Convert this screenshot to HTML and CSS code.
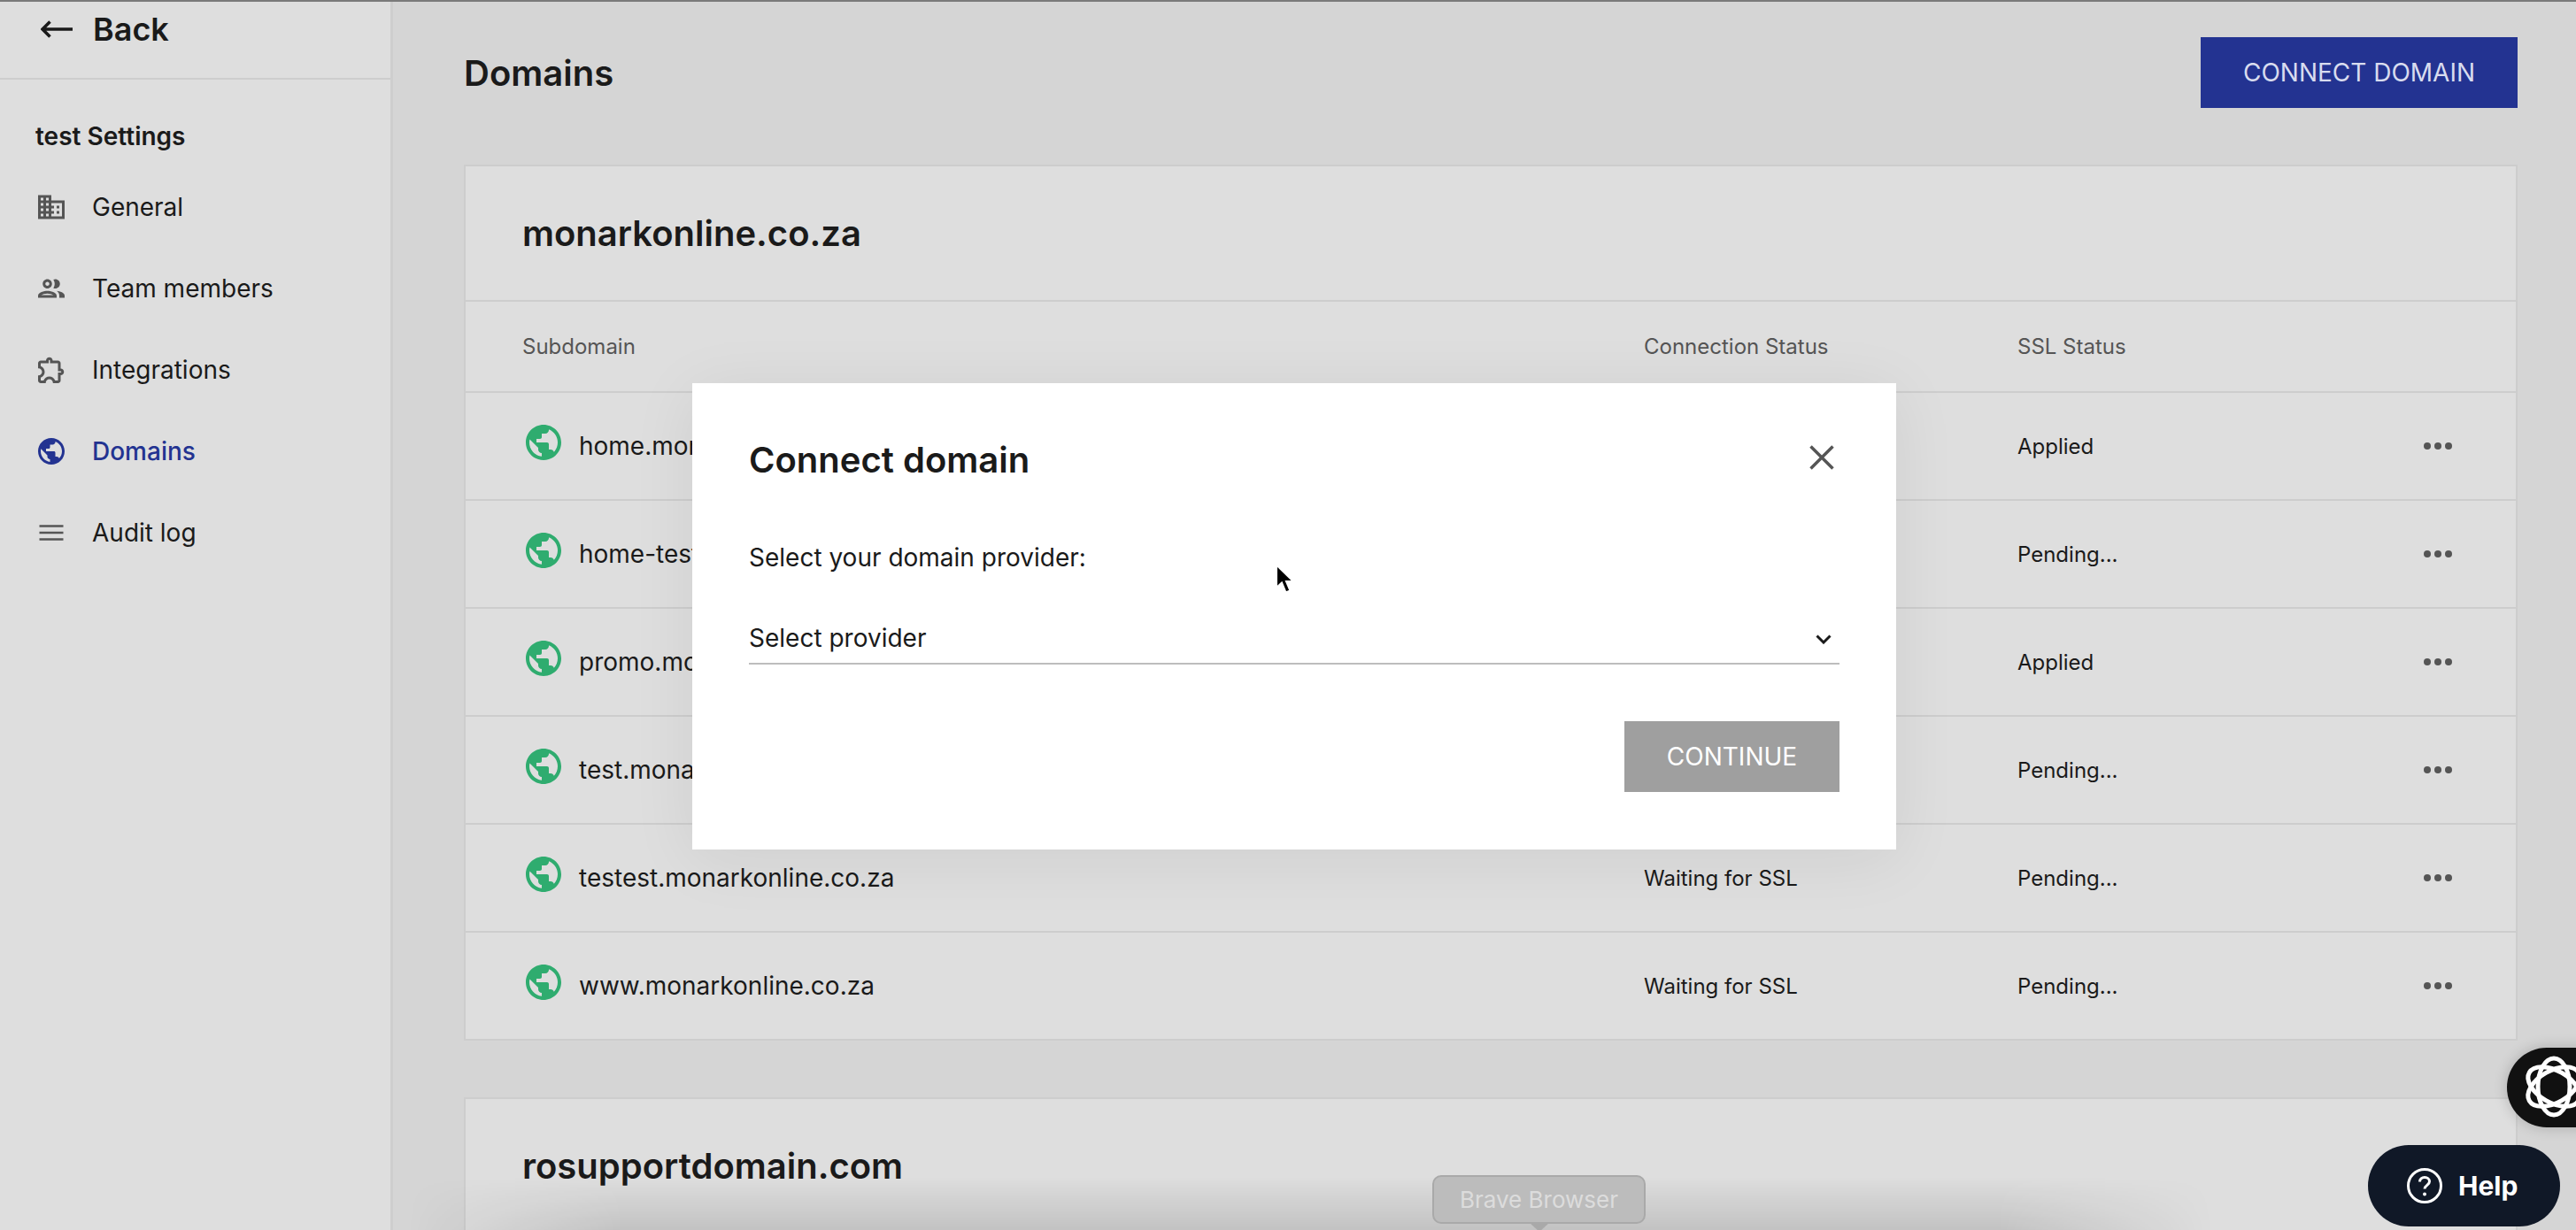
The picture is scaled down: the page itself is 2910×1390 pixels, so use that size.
FILE: index.html
```html
<!DOCTYPE html>
<html lang="en">
<head>
    <meta charset="UTF-8">
    <meta name="viewport" content="width=device-width, initial-scale=1.0">
    <title>Domains</title>
    <link rel="stylesheet" href="styles.css">
</head>
<body>

    <svg class="defs" width="0" height="0">
        <symbol id="globe" viewBox="0 0 24 24">
            <path d="M12 2C6.48 2 2 6.48 2 12s4.48 10 10 10 10-4.48 10-10S17.52 2 12 2zm-1 17.93c-3.95-.49-7-3.85-7-7.93 0-.62.08-1.21.21-1.79L9 15v1c0 1.1.9 2 2 2v1.93zm6.9-2.54c-.26-.81-1-1.39-1.9-1.39h-1v-3c0-.55-.45-1-1-1H8v-2h2c.55 0 1-.45 1-1V7h2c1.1 0 2-.9 2-2v-.41c2.93 1.19 5 4.06 5 7.41 0 2.08-.8 3.97-2.1 5.39z"/>
        </symbol>
    </svg>

    <div class="app">
        <aside class="sidebar">
            <a class="back">
                <svg class="back-icon" viewBox="0 0 36 20"><path d="M36 10H2M10.500 1.500 2 10l8.500 8.500"/></svg>
                <span>Back</span>
            </a>
            <h2 class="side-title">test Settings</h2>
            <nav class="side-nav">
                <a class="nav-item">
                    <svg class="nav-icon" viewBox="0 0 24 24"><path d="M12 7V3H2v18h20V7H12zM6 19H4v-2h2v2zm0-4H4v-2h2v2zm0-4H4V9h2v2zm0-4H4V5h2v2zm4 12H8v-2h2v2zm0-4H8v-2h2v2zm0-4H8V9h2v2zm0-4H8V5h2v2zm10 12h-8v-2h2v-2h-2v-2h2v-2h-2V9h8v10zm-2-8h-2v2h2v-2zm0 4h-2v2h2v-2z"/></svg>
                    General
                </a>
                <a class="nav-item">
                    <svg class="nav-icon" viewBox="0 0 24 24"><path d="M9 13.750c-2.340 0-7 1.170-7 3.500V19h14v-1.750c0-2.330-4.660-3.500-7-3.500zM4.340 17c.84-.58 2.870-1.250 4.660-1.250s3.820.67 4.660 1.250H4.340zM9 12c1.930 0 3.500-1.570 3.500-3.500S10.930 5 9 5 5.500 6.570 5.500 8.500 7.070 12 9 12zm0-5c.83 0 1.500.67 1.500 1.500S9.830 10 9 10s-1.500-.67-1.500-1.500S8.170 7 9 7zm7.040 6.810c1.160.84 1.960 1.960 1.960 3.440V19h4v-1.750c0-2.020-3.500-3.170-5.960-3.440zM15 12c1.930 0 3.500-1.570 3.500-3.500S16.930 5 15 5c-.54 0-1.040.13-1.500.35.63.89 1 1.980 1 3.150s-.37 2.260-1 3.150c.46.22.96.35 1.500.35z"/></svg>
                    Team members
                </a>
                <a class="nav-item">
                    <svg class="nav-icon" viewBox="0 0 24 24"><path d="M10.500 4.500c.28 0 .5.22.5.5v2h6v6h2c.28 0 .5.22.5.5s-.22.5-.5.5h-2v6h-2.120c-.68-1.750-2.390-3-4.380-3s-3.700 1.250-4.380 3H4v-2.120c1.750-.68 3-2.390 3-4.380 0-1.990-1.240-3.700-2.990-4.380L4 7h6V5c0-.28.22-.5.5-.5m0-2C9.120 2.500 8 3.620 8 5H4c-1.100 0-1.990.9-1.990 2v3.800h.29c1.490 0 2.700 1.210 2.700 2.700s-1.210 2.700-2.700 2.700H2V20c0 1.100.9 2 2 2h3.800v-.3c0-1.490 1.210-2.700 2.700-2.700 1.490 0 2.700 1.210 2.700 2.700v.3H17c1.100 0 2-.9 2-2v-4c1.380 0 2.500-1.120 2.500-2.500S20.380 11 19 11V7c0-1.100-.9-2-2-2h-4c0-1.380-1.120-2.500-2.500-2.500z"/></svg>
                    Integrations
                </a>
                <a class="nav-item active">
                    <svg class="nav-icon"><use href="#globe"/></svg>
                    Domains
                </a>
                <a class="nav-item">
                    <svg class="nav-icon" viewBox="0 0 24 24"><path d="M3 17.800h18v-1.600H3v1.600zm0-5h18v-1.600H3v1.600zm0-6.600v1.600h18V6.200H3z"/></svg>
                    Audit log
                </a>
            </nav>
        </aside>

        <main class="main">
            <header class="page-head">
                <h1>Domains</h1>
                <button class="connect-btn">CONNECT DOMAIN</button>
            </header>

            <section class="card">
                <h3 class="card-title">monarkonline.co.za</h3>
                <div class="row row-head">
                    <div class="col-name">Subdomain</div>
                    <div class="col-conn">Connection Status</div>
                    <div class="col-ssl">SSL Status</div>
                </div>
                <div class="row">
                    <div class="col-name"><svg class="row-globe"><use href="#globe"/></svg>home.monarkonline.co.za</div>
                    <div class="col-conn"></div>
                    <div class="col-ssl">Applied</div>
                    <div class="dots"><i></i><i></i><i></i></div>
                </div>
                <div class="row">
                    <div class="col-name"><svg class="row-globe"><use href="#globe"/></svg>home-test.monarkonline.co.za</div>
                    <div class="col-conn"></div>
                    <div class="col-ssl">Pending...</div>
                    <div class="dots"><i></i><i></i><i></i></div>
                </div>
                <div class="row">
                    <div class="col-name"><svg class="row-globe"><use href="#globe"/></svg>promo.monarkonline.co.za</div>
                    <div class="col-conn"></div>
                    <div class="col-ssl">Applied</div>
                    <div class="dots"><i></i><i></i><i></i></div>
                </div>
                <div class="row">
                    <div class="col-name"><svg class="row-globe"><use href="#globe"/></svg>test.monarkonline.co.za</div>
                    <div class="col-conn"></div>
                    <div class="col-ssl">Pending...</div>
                    <div class="dots"><i></i><i></i><i></i></div>
                </div>
                <div class="row">
                    <div class="col-name"><svg class="row-globe"><use href="#globe"/></svg>testest.monarkonline.co.za</div>
                    <div class="col-conn">Waiting for SSL</div>
                    <div class="col-ssl">Pending...</div>
                    <div class="dots"><i></i><i></i><i></i></div>
                </div>
                <div class="row">
                    <div class="col-name"><svg class="row-globe"><use href="#globe"/></svg>www.monarkonline.co.za</div>
                    <div class="col-conn">Waiting for SSL</div>
                    <div class="col-ssl">Pending...</div>
                    <div class="dots"><i></i><i></i><i></i></div>
                </div>
            </section>

            <section class="card">
                <h3 class="card-title">rosupportdomain.com</h3>
            </section>
        </main>
    </div>

    <div class="dock-shade"></div>

    <div class="tooltip">Brave Browser</div>

    <div class="modal">
        <div class="modal-head">
            <h2>Connect domain</h2>
            <svg class="modal-close" viewBox="0 0 28 28"><path d="M1.500 1.500l25 25M26.500 1.500l-25 25"/></svg>
        </div>
        <div class="modal-label">Select your domain provider:</div>
        <div class="select">
            <span>Select provider</span>
            <svg class="select-arrow" viewBox="0 0 18 11"><path d="M1.500 1.500 9 9l7.500-7.500"/></svg>
        </div>
        <div class="modal-foot">
            <button class="continue-btn">CONTINUE</button>
        </div>
    </div>

    <svg class="cursor" viewBox="0 0 22 36"><path d="M2 1.500V27l6-5.500 4.500 11 5-2-4.500-10.500H21z"/></svg>

    <div class="ai-pill">
        <svg class="ai-icon" viewBox="0 0 80 80">
            <ellipse cx="40" cy="40" rx="32" ry="18" transform="rotate(30 40 40)"/>
            <ellipse cx="40" cy="40" rx="32" ry="18" transform="rotate(90 40 40)"/>
            <ellipse cx="40" cy="40" rx="32" ry="18" transform="rotate(150 40 40)"/>
        </svg>
    </div>

    <button class="help-pill">
        <svg class="help-icon" viewBox="0 0 40 40">
            <circle cx="20" cy="20" r="18.500"/>
            <path d="M14.500 15.500c0-3 2.400-5 5.500-5s5.500 2 5.500 4.800c0 4-5.500 4.200-5.500 8.200"/>
            <circle class="help-dot" cx="20" cy="29.500" r="2"/>
        </svg>
        Help
    </button>

</body>
</html>
```

FILE: styles.css
```css
* {
    box-sizing: border-box;
}

html, body {
    margin: 0;
    height: 100%;
    overflow: hidden;
}

body {
    font-family: 'Inter', 'Liberation Sans', sans-serif;
    font-size: 26px;
    color: #1a1a1a;
    background-color: #d5d5d5;
    border-top: 2px solid #7a7a7a;
}

h1, h2, h3 {
    margin: 0;
}

.defs {
    position: absolute;
}

.app {
    display: flex;
    height: 1388px;
}

/* sidebar */
.sidebar {
    width: 444px;
    flex-shrink: 0;
    background-color: #dedede;
    border-right: 3px solid #cecece;
}

.back {
    display: flex;
    align-items: center;
    gap: 23px;
    height: 88px;
    padding: 0 0 24px 46px;
    border-bottom: 2px solid #cdcdcd;
    font-size: 36px;
    font-weight: 600;
}

.back-icon {
    width: 36px;
    height: 20px;
    fill: none;
    stroke: #1a1a1a;
    stroke-width: 3.500;
}

.side-title {
    padding: 47px 0 0 40px;
    font-size: 28px;
    line-height: 34px;
    font-weight: 600;
}

.side-nav {
    margin-top: 17px;
}

.nav-item {
    display: flex;
    align-items: center;
    gap: 28px;
    height: 92px;
    padding-left: 40px;
    font-size: 28px;
}

.nav-icon {
    width: 36px;
    height: 36px;
    fill: #555;
}

.nav-item.active {
    color: #233391;
    font-weight: 500;
}

.nav-item.active .nav-icon {
    fill: #233391;
}

/* main column */
.main {
    flex: 1;
    padding: 40px 66px 0 80px;
}

.page-head {
    display: flex;
    justify-content: space-between;
    align-items: center;
    height: 80px;
    margin-bottom: 64px;
}

.page-head h1 {
    font-size: 40px;
    font-weight: 600;
}

.connect-btn {
    width: 358px;
    height: 80px;
    border: none;
    background-color: #233391;
    color: #d8dcef;
    font-family: inherit;
    font-size: 28px;
}

.card {
    background-color: #dedede;
    border: 2px solid #cdcdcd;
    margin-bottom: 64px;
}

.card-title {
    height: 151px;
    padding: 0 0 0 64px;
    font-size: 40px;
    line-height: 151px;
    font-weight: 600;
}

.row {
    display: flex;
    align-items: center;
    height: 122px;
    border-top: 2px solid #cdcdcd;
    font-size: 24px;
    position: relative;
}

.row-head {
    height: 103px;
    color: #555;
}

.col-name {
    display: flex;
    align-items: center;
    width: 1331px;
    padding-left: 64px;
    font-size: 28px;
}

.row-head .col-name {
    font-size: 24px;
}

.col-conn {
    width: 422px;
}

.row-globe {
    width: 48px;
    height: 48px;
    margin: -8px 16px 0 0;
    flex-shrink: 0;
    fill: #2fac6f;
}

.dots {
    position: absolute;
    right: 72px;
    display: flex;
    gap: 4px;
}

.dots i {
    width: 8px;
    height: 8px;
    border-radius: 50%;
    background-color: #555;
}

/* things lying over the page */
.dock-shade {
    position: absolute;
    left: 460px;
    width: 2040px;
    bottom: 0;
    height: 60px;
    background: linear-gradient(rgba(0, 0, 0, 0), rgba(0, 0, 0, 0.12));
    -webkit-mask-image: linear-gradient(to right, transparent, #000 12%, #000 88%, transparent);
    mask-image: linear-gradient(to right, transparent, #000 12%, #000 88%, transparent);
}

.tooltip {
    position: absolute;
    left: 1618px;
    top: 1328px;
    width: 241px;
    height: 55px;
    border: 2px solid #a9a9a9;
    border-radius: 10px;
    background-color: #bcbcbc;
    color: #dcdcdc;
    font-size: 26px;
    line-height: 51px;
    text-align: center;
}

.tooltip::after {
    content: "";
    position: absolute;
    left: 108px;
    bottom: -11px;
    border-left: 11px solid transparent;
    border-right: 11px solid transparent;
    border-top: 10px solid #a9a9a9;
}

.modal {
    position: absolute;
    left: 782px;
    top: 433px;
    width: 1360px;
    height: 527px;
    padding: 64px;
    background-color: #fff;
    box-shadow: 0 10px 70px rgba(0, 0, 0, 0.07);
}

.modal-head {
    display: flex;
    justify-content: space-between;
    align-items: center;
    height: 48px;
}

.modal-head h2 {
    padding-bottom: 3px;
    font-size: 40px;
    font-weight: 600;
}

.modal-close {
    width: 28px;
    height: 28px;
    margin: -8px 6px 0 0;
    fill: none;
    stroke: #555;
    stroke-width: 3.500;
}

.modal-label {
    margin-top: 67px;
    font-size: 28px;
    line-height: 36px;
}

.select {
    display: flex;
    justify-content: space-between;
    align-items: flex-end;
    height: 66px;
    margin-top: 37px;
    padding-bottom: 10px;
    border-bottom: 2px solid #bdbdbd;
    font-size: 28px;
    line-height: 36px;
}

.select-arrow {
    width: 18px;
    height: 11px;
    margin: 0 9px 11px 0;
    fill: none;
    stroke: #1a1a1a;
    stroke-width: 3;
}

.modal-foot {
    display: flex;
    justify-content: flex-end;
    margin-top: 64px;
}

.continue-btn {
    width: 243px;
    height: 80px;
    border: none;
    background-color: #9f9f9f;
    color: #fff;
    font-family: inherit;
    font-size: 28px;
}

.cursor {
    position: absolute;
    left: 1440px;
    top: 637px;
    width: 22px;
    height: 36px;
    fill: #000;
    stroke: #fff;
    stroke-width: 2;
}

.ai-pill {
    position: absolute;
    left: 2832px;
    top: 1184px;
    width: 120px;
    height: 90px;
    border-radius: 45px 0 0 45px;
    background-color: #111;
    box-shadow: 0 0 16px rgba(0, 0, 0, 0.2);
    padding: 4px 0 0 13px;
}

.ai-icon {
    width: 80px;
    height: 80px;
    fill: none;
    stroke: #fff;
    stroke-width: 5;
}

.help-pill {
    position: absolute;
    left: 2675px;
    top: 1294px;
    width: 217px;
    height: 92px;
    display: flex;
    align-items: center;
    gap: 18px;
    padding: 0 0 0 44px;
    border: none;
    border-radius: 46px;
    background-color: #101827;
    color: #fff;
    font-family: inherit;
    font-size: 30px;
    font-weight: 700;
}

.help-icon {
    width: 40px;
    height: 40px;
    fill: none;
    stroke: #fff;
    stroke-width: 3;
}

.help-dot {
    fill: #fff;
    stroke: none;
}
```
